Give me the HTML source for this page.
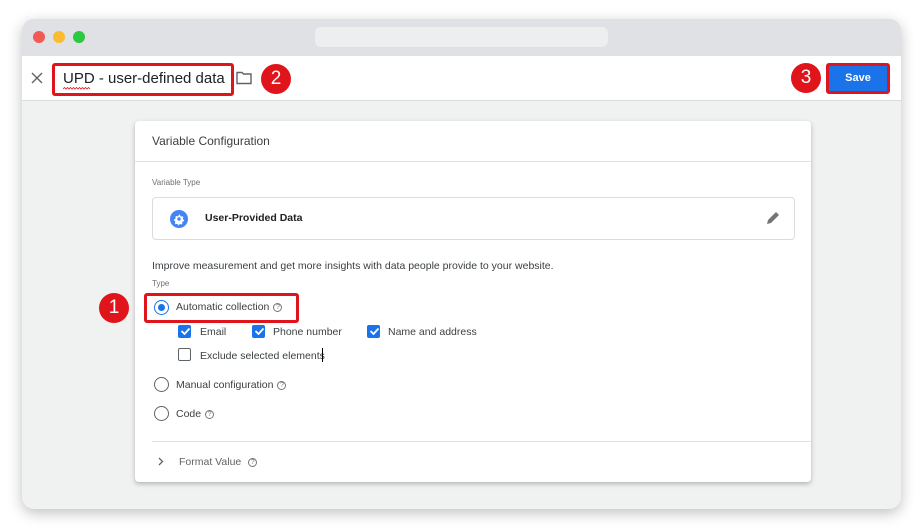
<!DOCTYPE html>
<html><head><meta charset="utf-8"><style>
*{box-sizing:border-box;margin:0;padding:0}
body{width:922px;height:529px;background:#fff;position:relative;overflow:hidden;font-family:"Liberation Sans",Arial,sans-serif;color:#202124}
.a{position:absolute}
.win{left:22px;top:19px;width:879px;height:490px;border-radius:12px;background:#f0f1f1;overflow:hidden;box-shadow:0 4px 14px rgba(0,0,0,.25)}
.t{font-size:11px;white-space:nowrap}
.q{display:inline-block;width:9px;height:9px;border:1px solid #777;border-radius:50%;font-size:7px;line-height:7px;text-align:center;color:#777;vertical-align:1px;margin-left:4px}
.cb{width:13px;height:13px;border-radius:2px;background:#1a73e8}
.rd{width:15px;height:15px;border:1.5px solid #5f6368;border-radius:50%}
.badge{width:30px;height:30px;border-radius:50%;background:#e0141b;color:#fff;font-size:19px;text-align:center;line-height:30px}
</style></head><body>
<div class="a win">
 <div class="a" style="left:0;top:0;width:879px;height:37px;background:#dfe1e5"></div>
 <div class="a" style="left:11px;top:12px;width:12px;height:12px;border-radius:50%;background:#f25a55"></div>
 <div class="a" style="left:31px;top:12px;width:12px;height:12px;border-radius:50%;background:#fbbb2e"></div>
 <div class="a" style="left:51px;top:12px;width:12px;height:12px;border-radius:50%;background:#2cc840"></div>
 <div class="a" style="left:293px;top:8px;width:293px;height:20px;border-radius:6px;background:#eceef0"></div>
 <div class="a" style="left:0;top:37px;width:879px;height:45px;background:#fff;border-bottom:1px solid #dadce0"></div>
</div>
<svg class="a" style="left:31px;top:72px" width="12" height="12" viewBox="0 0 12 12"><path d="M1 1l10 10M11 1L1 11" stroke="#5f6368" stroke-width="1.4"/></svg>
<div class="a" style="left:52px;top:63px;width:182px;height:33px;border:3px solid #e0141b;border-radius:3px;background:#fff"></div>
<div class="a" style="left:63px;top:70px;font-size:15px;color:#202124">UPD - user-defined data</div>
<svg class="a" style="left:63px;top:87px" width="28" height="3" viewBox="0 0 28 3"><path d="M0 2l1.5-1.5 1.5 1.5 1.5-1.5 1.5 1.5 1.5-1.5 1.5 1.5 1.5-1.5 1.5 1.5 1.5-1.5 1.5 1.5 1.5-1.5 1.5 1.5 1.5-1.5 1.5 1.5 1.5-1.5 1.5 1.5 1.5-1.5 1.5 1.5" fill="none" stroke="#e0141b" stroke-width=".8"/></svg>
<svg class="a" style="left:236px;top:71px" width="16" height="14" viewBox="0 0 16 14"><path d="M1 1.5h5l1.5 1.5h7.5v9.5h-14z" fill="none" stroke="#5f6368" stroke-width="1.4"/></svg>
<div class="a badge" style="left:261px;top:64px">2</div>
<div class="a badge" style="left:791px;top:63px">3</div>
<div class="a" style="left:826px;top:63px;width:64px;height:31px;border:3px solid #e0141b;border-radius:3px;background:#1a73e8;color:#fff;font-size:11px;font-weight:bold;text-align:center;line-height:25px">Save</div>

<div class="a" style="left:135px;top:121px;width:676px;height:361px;background:#fff;border-radius:4px;box-shadow:0 2px 5px rgba(0,0,0,.25)">
 <div class="a t" style="left:17px;top:13px;font-size:12px;color:#3c4043">Variable Configuration</div>
 <div class="a" style="left:0;top:40px;width:676px;height:1px;background:#e3e3e3"></div>
 <div class="a t" style="left:17px;top:57px;font-size:8px;color:#6f6f6f">Variable Type</div>
 <div class="a" style="left:17px;top:76px;width:643px;height:43px;border:1px solid #dadce0;border-radius:4px"></div>
 <svg class="a" style="left:35px;top:89px" width="18" height="18" viewBox="0 0 18 18"><circle cx="9" cy="9" r="9" fill="#4285f4"/><path d="M9 4.5l1 .3.3 1.2 1.1.6 1.2-.4.7.8-.4 1.2.2 1.2 1 .7-.2 1-1.2.4-.6 1.1.3 1.2-.8.7-1.2-.4-1.2.3-.6 1.1H8.4l-.5-1.1-1.1-.5-1.2.4-.7-.8.4-1.2-.3-1.2-1.1-.6.1-1 1.2-.5.5-1.1-.3-1.2.8-.7 1.2.4 1.1-.5z" fill="#fff"/><circle cx="9" cy="9" r="1.7" fill="#4285f4"/></svg>
 <div class="a t" style="left:70px;top:91px;font-size:10.5px;font-weight:bold">User-Provided Data</div>
 <svg class="a" style="left:630px;top:89px" width="16" height="16" viewBox="0 0 16 16"><path d="M2 14l1-4 8-8 3 3-8 8z" fill="#757575"/></svg>
 <div class="a t" style="left:17px;top:139px;font-size:10.5px;color:#3c4043">Improve measurement and get more insights with data people provide to your website.</div>
 <div class="a t" style="left:17px;top:158px;font-size:8px;color:#6f6f6f">Type</div>
 <div class="a" style="left:9px;top:172px;width:155px;height:30px;border:3px solid #e0141b;border-radius:3px"></div>
 <div class="a rd" style="left:19px;top:179px;border-color:#1a73e8"><div class="a" style="left:2.5px;top:2.5px;width:7px;height:7px;border-radius:50%;background:#1a73e8"></div></div>
 <div class="a t" style="left:41px;top:180px;font-size:10.5px;color:#3c4043">Automatic collection<span class="q">?</span></div>
 <div class="a cb" style="left:43px;top:204px"></div><div class="a t" style="left:65px;top:205px;color:#3c4043;font-size:10.5px">Email</div>
 <div class="a cb" style="left:117px;top:204px"></div><div class="a t" style="left:138px;top:205px;color:#3c4043;font-size:10.5px">Phone number</div>
 <div class="a cb" style="left:232px;top:204px"></div><div class="a t" style="left:253px;top:205px;color:#3c4043;font-size:10.5px">Name and address</div>
 <div class="a" style="left:43px;top:227px;width:13px;height:13px;border:1.5px solid #5f6368;border-radius:2px"></div>
 <div class="a t" style="left:65px;top:229px;color:#3c4043;font-size:10.5px">Exclude selected elements</div>
 <div class="a" style="left:187px;top:227px;width:1px;height:14px;background:#000"></div>
 <div class="a rd" style="left:19px;top:256px"></div>
 <div class="a t" style="left:41px;top:258px;font-size:10.5px;color:#3c4043">Manual configuration<span class="q">?</span></div>
 <div class="a rd" style="left:19px;top:285px"></div>
 <div class="a t" style="left:41px;top:287px;font-size:10.5px;color:#3c4043">Code<span class="q">?</span></div>
 <div class="a" style="left:17px;top:320px;width:659px;height:1px;background:#e3e3e3"></div>
 <svg class="a" style="left:23px;top:336px" width="6" height="9" viewBox="0 0 6 9"><path d="M1 1l3.5 3.5L1 8" fill="none" stroke="#5f6368" stroke-width="1.3"/></svg>
 <div class="a t" style="left:44px;top:335px;font-size:10.5px;color:#5f6368">Format Value<span class="q" style="margin-left:7px">?</span></div>
</div>
<svg class="a" style="left:0;top:0" width="922" height="529"><g fill="none" stroke="#fff" stroke-width="1.8"><path d="M181.5 331l3 3 5-5.5M255.5 331l3 3 5-5.5M370.5 331l3 3 5-5.5"/></g></svg>
<div class="a badge" style="left:99px;top:293px">1</div>
</body></html>
